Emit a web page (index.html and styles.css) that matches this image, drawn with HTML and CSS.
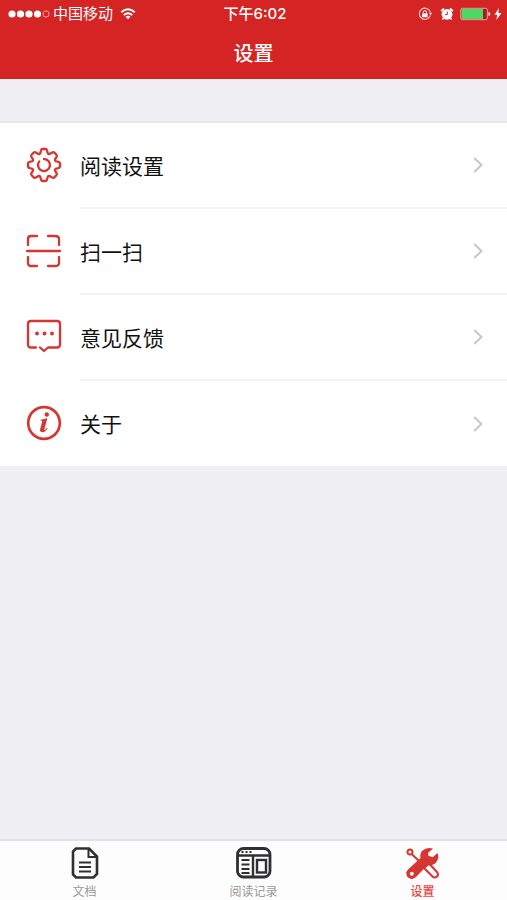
FILE: index.html
```html
<!DOCTYPE html>
<html lang="zh-CN">
<head>
<meta charset="utf-8">
<meta name="viewport" content="width=device-width, initial-scale=1">
<title>设置</title>
<link rel="stylesheet" href="styles.css">
</head>
<body>
<header class="header">
  <div class="status">
    <div class="status-left">
      <svg class="signal" viewBox="0 0 42 10" aria-hidden="true"><g fill="#fff"><circle cx="4" cy="5" r="3.6"/><circle cx="12.500" cy="5" r="3.600"/><circle cx="21" cy="5" r="3.600"/><circle cx="29.500" cy="5" r="3.600"/></g><circle cx="38" cy="5" r="3.100" fill="none" stroke="#f5a3a3" stroke-width="1"/></svg>
      <span class="carrier">中国移动</span>
      <svg class="wifi" viewBox="0 0 16 12" aria-hidden="true"><path d="M1.200 4.200Q8-1.600 14.800 4.200M3.700 7Q8 3.400 12.300 7" fill="none" stroke="#fff" stroke-width="1.900"/><path d="M5.500 8.700Q8 6.800 10.500 8.700L8 11.300Z" fill="#fff"/></svg>
    </div>
    <time class="clock">下午6:02</time>
    <div class="status-right">
      <svg class="lock" viewBox="0 0 14 14" aria-hidden="true"><path d="M12.300 8.300A5.600 5.600 0 1 1 12.300 5.200" fill="none" stroke="#fbd0d0" stroke-width="1.100"/><path d="M11 5.800h3l-1.500 2.400z" fill="#fff"/><rect x="4.200" y="6.400" width="5.400" height="3.800" fill="#fff"/><path d="M5.300 6.600V5.200a1.600 1.600 0 0 1 3.200 0v1.400" fill="none" stroke="#fff"/></svg>
      <svg class="alarm" viewBox="0 0 14 14" aria-hidden="true"><circle cx="7" cy="7.300" r="5.400" fill="#fff"/><path d="M1.100 4.200 4 1.500M12.900 4.200 10 1.500M3.500 11l-1 1.500M10.500 11l1 1.500" stroke="#fff" stroke-width="1.800"/><path d="M7.300 4.600v3H5" fill="none" stroke="#d42424" stroke-width="1"/></svg>
      <svg class="battery" viewBox="0 0 31 14" aria-hidden="true"><rect x=".8" y="1.300" width="26.500" height="11.400" rx="1.500" fill="#a91c1c" stroke="#f2a1a1"/><rect x="1.500" y="2" width="21.500" height="10" fill="#4bd964"/><path d="M28.500 5v4q1.800-.5 1.800-2t-1.800-2" fill="#fff"/></svg>
      <svg class="bolt" viewBox="0 0 8 12" aria-hidden="true"><path d="M5 0 .5 6.800h2.800L2.300 12 7.500 4.900H4.300Z" fill="#fff"/></svg>
    </div>
  </div>
  <h1 class="title">设置</h1>
</header>

<main class="content">
  <nav class="list" aria-label="设置">
    <a class="row" href="#reading">
      <svg class="row-icon" viewBox="-18 -18 36 36" aria-hidden="true"><path d="M-3.800-11.600-3-14.500Q-2.700-16-1.500-16H1.500Q2.700-16 3-14.500L3.800-11.600Q4.800-10.600 5.600-11L8.200-12.600Q9.400-13.300 10.300-12.400L12.400-10.300Q13.300-9.400 12.600-8.200L11-5.600Q10.600-4.800 11.600-3.800L14.500-3Q16-2.700 16-1.500V1.500Q16 2.700 14.500 3L11.600 3.800Q10.600 4.800 11 5.600L12.600 8.200Q13.300 9.400 12.400 10.300L10.300 12.400Q9.400 13.300 8.200 12.600L5.600 11Q4.800 10.600 3.800 11.600L3 14.500Q2.700 16 1.500 16H-1.500Q-2.700 16-3 14.500L-3.800 11.600Q-4.800 10.600-5.600 11L-8.200 12.600Q-9.400 13.300-10.300 12.400L-12.400 10.300Q-13.300 9.400-12.600 8.200L-11 5.600Q-10.600 4.800-11.600 3.800L-14.500 3Q-16 2.700-16 1.500V-1.500Q-16-2.700-14.500-3L-11.600-3.800Q-10.600-4.800-11-5.600L-12.600-8.200Q-13.300-9.400-12.400-10.300L-10.300-12.400Q-9.400-13.300-8.200-12.600L-5.600-11Q-4.800-10.600-3.800-11.600Z"/><path d="M0-6A6 6 0 1 1-4.800-3.600"/></svg>
      <span class="row-body"><span class="row-label">阅读设置</span><svg class="chevron" viewBox="0 0 10 16" aria-hidden="true"><path d="M1.200 1 8.500 8 1.200 15"/></svg></span>
    </a>
    <a class="row" href="#scan">
      <svg class="row-icon" viewBox="-18 -18 36 36" aria-hidden="true"><path d="M-17 0H16M-16-6V-12Q-16-15-13-15H-7M4-15H11Q15-15 15-12V-6M-16 6V12Q-16 15-13 15H-7M4 15H11Q15 15 15 12V6"/></svg>
      <span class="row-body"><span class="row-label">扫一扫</span><svg class="chevron" viewBox="0 0 10 16" aria-hidden="true"><path d="M1.200 1 8.500 8 1.200 15"/></svg></span>
    </a>
    <a class="row" href="#feedback">
      <svg class="row-icon" viewBox="-18 -18 36 36" aria-hidden="true"><path d="M-8 10.500H-13Q-16 10.500-16 7.500V-13Q-16-16-13-16H13Q16-16 16-13V7.500Q16 10.500 13 10.500H4L0 14-4 10.500"/><g class="solid"><circle cx="-7" cy="-3.500" r="1.900"/><circle cx="0.500" cy="-3.500" r="1.900"/><circle cx="8" cy="-3.500" r="1.900"/></g></svg>
      <span class="row-body"><span class="row-label">意见反馈</span><svg class="chevron" viewBox="0 0 10 16" aria-hidden="true"><path d="M1.200 1 8.500 8 1.200 15"/></svg></span>
    </a>
    <a class="row" href="#about">
      <svg class="row-icon" viewBox="-18 -18 36 36" aria-hidden="true"><circle r="15.800" stroke-width="2.700"/><g class="solid"><circle cx="2.800" cy="-8.500" r="2.200"/><path d="M-3.500-3.200Q.5-3.800 3.400-5L.5 5.700Q0 7.500 1 6.900 2 6.200 3 4.700L3.700 5.200Q1.300 9-1.700 9.200-4.700 9-3.800 5.800L-1.800-1.300Q-1.400-2.600-3.500-2.400Z"/></g></svg>
      <span class="row-body"><span class="row-label">关于</span><svg class="chevron" viewBox="0 0 10 16" aria-hidden="true"><path d="M1.200 1 8.500 8 1.200 15"/></svg></span>
    </a>
  </nav>
</main>

<nav class="tabs" aria-label="标签栏">
  <a class="tab" href="#documents">
    <svg class="tab-icon" viewBox="0 0 36 36" aria-hidden="true"><path d="M9 3.500H22L30 11.500V29L26.500 32.500H9L6 29.500V6.500Z" stroke-width="2.600"/><path d="M21.500 4V12H29.500" stroke-width="2"/><path d="M12 17.500H24M12 22H24M12 26.500H24" stroke-width="2"/></svg>
    <span>文档</span>
  </a>
  <a class="tab" href="#history">
    <svg class="tab-icon" viewBox="0 0 36 36" aria-hidden="true"><rect x="1.500" y="3.500" width="32.500" height="28.500" rx="6" stroke-width="2.800"/><path d="M2 10.500H34M17 11V32" stroke-width="2.400"/><path d="M5.500 7H7.500M9.500 7H11.500M13.500 7H15.500" stroke-width="1.800"/><path d="M5.500 15H13.500M5.500 19.500H13.500M5.500 24H13.500M5.500 28H13.500" stroke-width="2"/><rect x="21" y="15" width="9" height="12.500" stroke-width="2.400"/></svg>
    <span>阅读记录</span>
  </a>
  <a class="tab active" href="#settings" aria-current="page">
    <svg class="tab-icon" viewBox="0 0 36 36" aria-hidden="true"><path d="M6 8.500 20 21.500" stroke-width="2"/><circle cx="5" cy="7" r="2.500" stroke-width="2"/><path d="M19 23 24 18.500 32 27Q34 29.500 32 31.500 29.500 33.500 27.500 31.500Z" fill="#fdfdfd" stroke-width="2"/><path class="solid" fill-rule="evenodd" d="M28 3.500Q21.500 1.500 17 6 14.500 9 15.500 13L3 24.500Q-.5 28.500 3 32.500 7 35.500 11 32L22.500 20Q28 21 31.500 17 34.500 13 32.500 8L28 12 23.500 11 23 8ZM6.800 26.800A2 2 0 1 0 6.800 30.800 2 2 0 1 0 6.800 26.800Z"/></svg>
    <span>设置</span>
  </a>
</nav>
</body>
</html>
```
FILE: styles.css
```css
* {
  box-sizing: border-box;
}

body {
  margin: 0;
  min-height: 100vh;
  display: flex;
  flex-direction: column;
  background: #efeff4;
  color: #111;
  font-family: "Liberation Sans", "Noto Sans CJK SC", sans-serif;
}

a {
  color: inherit;
  text-decoration: none;
}

svg {
  display: block;
  flex: none;
}

.header {
  height: 79px;
  background: #d42424;
  color: #fff;
}

.status {
  display: grid;
  grid-template-columns: 1fr auto 1fr;
  align-items: center;
  height: 27px;
  padding: 0 5px 0 8px;
  font-size: 15px;
  line-height: 20px;
}

.status-left,
.status-right {
  display: flex;
  align-items: center;
}

.status-left {
  gap: 3px;
}

.status-right {
  justify-content: flex-end;
  gap: 6px;
}

.signal {
  width: 42px;
  height: 10px;
}

.wifi {
  width: 16px;
  height: 12px;
  margin-left: 4px;
}

.clock {
  font-family: "Inter", "Noto Sans CJK SC", sans-serif;
  font-weight: 500;
}

.lock,
.alarm {
  width: 14px;
  height: 14px;
}

.alarm {
  margin-left: 2px;
}

.battery {
  width: 31px;
  height: 14px;
}

.bolt {
  width: 8px;
  height: 12px;
  margin-left: -3px;
}

.title {
  margin: 0;
  font-size: 20px;
  line-height: 54px;
  font-weight: 500;
  text-align: center;
}

.content {
  flex: 1;
  padding-top: 42px;
}

.list {
  border-top: 2px solid #e7e7ea;
  background: #fff;
}

.row {
  display: flex;
  align-items: center;
  gap: 18px;
  height: 86px;
  padding-left: 26px;
}

.row:last-child {
  height: 85px;
}

.row-icon {
  width: 36px;
  height: 36px;
  margin-bottom: 2px;
  fill: none;
  stroke: #d5362f;
  stroke-width: 2.3;
  stroke-linecap: round;
  stroke-linejoin: round;
}

.solid {
  fill: #d5362f;
  stroke: none;
}

.row-body {
  flex: 1;
  align-self: stretch;
  display: flex;
  align-items: center;
  justify-content: space-between;
  padding-right: 24px;
  border-bottom: 2px solid #f3f3f4;
}

.row:last-child .row-body {
  border-bottom: 0;
}

.row-label {
  padding-top: 3px;
  font-size: 21px;
  line-height: 30px;
}

.chevron {
  width: 10px;
  height: 16px;
  fill: none;
  stroke: #c7c7c9;
  stroke-width: 2;
}

.tabs {
  display: grid;
  grid-template-columns: repeat(3, 1fr);
  height: 61px;
  border-top: 2px solid #e2e2e5;
  background: #fdfdfd;
}

.tab {
  display: flex;
  flex-direction: column;
  align-items: center;
  gap: 3px;
  padding-top: 4px;
  color: #999;
  font-size: 12px;
  line-height: 16px;
}

.tab-icon {
  width: 36px;
  height: 36px;
  fill: none;
  stroke: #303032;
}

.tab.active {
  color: #f04444;
  font-weight: 500;
}

.active .tab-icon {
  stroke: #d5362f;
}

.tab .solid {
  stroke: none;
  fill: #d5362f;
}
```
